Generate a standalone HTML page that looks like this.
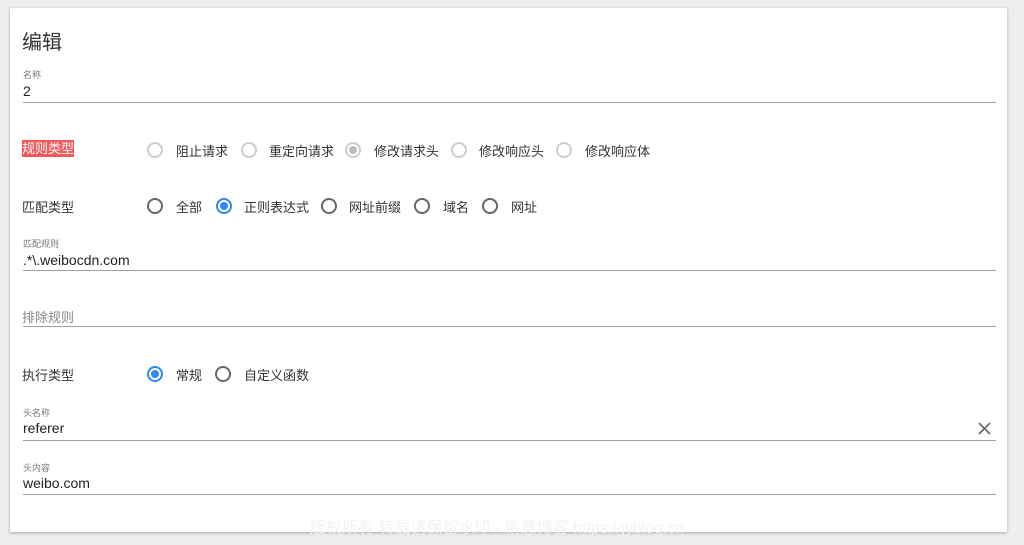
<!DOCTYPE html>
<html><head><meta charset="utf-8"><style>
body{margin:0;width:1024px;height:545px;background:#eeeeee;font-family:"Liberation Sans","Noto Sans CJK SC",sans-serif;position:relative;overflow:hidden;color:#333}
.card{position:absolute;left:10px;top:8px;width:997px;height:524px;background:#fff;box-shadow:0 1px 3px rgba(0,0,0,.3)}
.a{position:absolute;white-space:nowrap}
.t{font-size:13px;color:#333}
.s{font-size:9px;color:#777}
.v{font-size:14px;color:#222}
.ln{position:absolute;left:23px;width:973px;height:1px;background:#a0a0a0}
.r{position:absolute;width:12px;height:12px;border:2px solid #666;border-radius:50%;box-sizing:content-box}
.r.d{border-color:#ccc}
.r.on{border-color:#2f86f6}
.r.on::after{content:"";position:absolute;left:2px;top:2px;width:8px;height:8px;border-radius:50%;background:#2f86f6}
.r.dg::after{content:"";position:absolute;left:2px;top:2px;width:8px;height:8px;border-radius:50%;background:#bbb}
</style></head><body>
<div class="card"></div>
<div class="a" style="left:22px;top:26px;font-size:20px;color:#333">编辑</div>
<div class="a s" style="left:23px;top:68px">名称</div>
<div class="a v" style="left:23px;top:83px">2</div>
<div class="ln" style="top:102px"></div>

<div class="a t" style="left:22px;top:140px;background:#f0585a;color:#fff;line-height:17px">规则类型</div>
<div class="r d" style="left:147px;top:142px"></div><div class="a t" style="left:176px;top:141px">阻止请求</div>
<div class="r d" style="left:241px;top:142px"></div><div class="a t" style="left:269px;top:141px">重定向请求</div>
<div class="r d dg" style="left:345px;top:142px"></div><div class="a t" style="left:374px;top:141px">修改请求头</div>
<div class="r d" style="left:451px;top:142px"></div><div class="a t" style="left:479px;top:141px">修改响应头</div>
<div class="r d" style="left:556px;top:142px"></div><div class="a t" style="left:585px;top:141px">修改响应体</div>

<div class="a t" style="left:22px;top:197px">匹配类型</div>
<div class="r" style="left:147px;top:198px"></div><div class="a t" style="left:176px;top:197px">全部</div>
<div class="r on" style="left:216px;top:198px"></div><div class="a t" style="left:244px;top:197px">正则表达式</div>
<div class="r" style="left:321px;top:198px"></div><div class="a t" style="left:349px;top:197px">网址前缀</div>
<div class="r" style="left:414px;top:198px"></div><div class="a t" style="left:443px;top:197px">域名</div>
<div class="r" style="left:482px;top:198px"></div><div class="a t" style="left:511px;top:197px">网址</div>

<div class="a s" style="left:23px;top:237px">匹配规则</div>
<div class="a v" style="left:23px;top:252px">.*\.weibocdn.com</div>
<div class="ln" style="top:270px"></div>

<div class="a t" style="left:22px;top:307px;color:#888">排除规则</div>
<div class="ln" style="top:326px"></div>

<div class="a t" style="left:22px;top:365px">执行类型</div>
<div class="r on" style="left:147px;top:366px"></div><div class="a t" style="left:176px;top:365px">常规</div>
<div class="r" style="left:215px;top:366px"></div><div class="a t" style="left:244px;top:365px">自定义函数</div>

<div class="a s" style="left:23px;top:406px">头名称</div>
<div class="a v" style="left:23px;top:420px">referer</div>
<svg class="a" style="left:978px;top:422px" width="13" height="13" viewBox="0 0 13 13"><path d="M1 1L12 12M12 1L1 12" stroke="#666" stroke-width="1.6"/></svg>
<div class="ln" style="top:440px"></div>

<div class="a s" style="left:23px;top:461px">头内容</div>
<div class="a v" style="left:23px;top:475px">weibo.com</div>
<div class="ln" style="top:494px"></div>

<div class="a" style="left:310px;top:514px;font-size:16px;color:#f2f2f2">版权所有 转载请保留水印 - 倦意博客 https://jyblog.cn</div>
</body></html>
